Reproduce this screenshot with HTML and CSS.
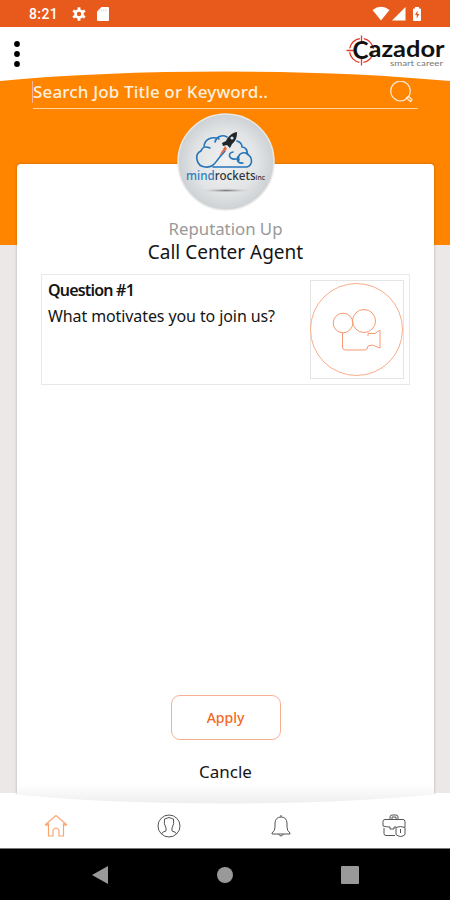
FILE: index.html
```html
<!DOCTYPE html>
<html lang="en">
<head>
<meta charset="utf-8">
<title>Cazador</title>
<link rel="stylesheet" href="styles.css">
</head>
<body>
<div class="status">
  <span class="clock">8:21</span>
  <svg class="gear" width="14" height="14" viewBox="0 0 14 14"><g fill="none" stroke="#fff"><circle cx="7" cy="7" r="3.5" stroke-width="2.6"/><path d="M7 .2V3M7 11v2.8M1.1 3.6l2.4 1.4M10.5 9l2.4 1.4M1.1 10.4L3.5 9M10.5 5l2.4-1.4" stroke-width="2.8"/></g></svg>
  <svg class="sd" width="12" height="14" viewBox="0 0 12 14"><path d="M4.5 0H11q1 0 1 1v12q0 1-1 1H1q-1 0-1-1V4.5z" fill="#fff"/><path d="M4.5 2.5v2M6.7 2.5v2M9 2.5v2" stroke="#f8cdb9"/></svg>
  <svg class="signals" width="52" height="16" viewBox="0 0 52 16" fill="#fff"><path d="M.5 4Q9 -2.5 17.500 4L9 14.500z"/><path d="M33.500 1v13.500H20z"/><path d="M43 2.500V1h4v1.500h1q1 0 1 1v10.500q0 1-1 1h-6q-1 0-1-1V3.500q0-1 1-1z"/><path d="M45.500 4.500L43 9h1.700v3.500L47.300 8h-1.800z" fill="#e85a1c"/></svg>
</div>
<header class="header">
  <svg class="curve" width="450" height="54" viewBox="0 0 450 54"><path d="M0 0H450V54Q350 44.500 225 44.500T0 54z" fill="#fff"/></svg>
  <svg class="dots" width="6" height="26" viewBox="0 0 6 26"><circle cx="3" cy="3" r="2.900"/><circle cx="3" cy="13" r="2.900"/><circle cx="3" cy="23" r="2.900"/></svg>
  <svg class="brand" width="100" height="34" viewBox="0 0 100 34">
    <g fill="none" stroke="#e23b2b" stroke-width="1.300"><circle cx="15.500" cy="15.500" r="12" stroke-dasharray="14.850 4" stroke-dashoffset="-2"/><path d="M15.500 .5v8M15.500 22.500v8M.5 15.500h9"/></g>
    <text class="brand-c" x="6.500" y="24" textLength="16" lengthAdjust="spacingAndGlyphs">C</text>
    <text class="brand-name" x="22.500" y="21.500" textLength="76" lengthAdjust="spacingAndGlyphs">azador</text>
    <text class="brand-sub" x="44" y="31" textLength="53" lengthAdjust="spacingAndGlyphs">smart career</text>
  </svg>
</header>
<main class="main">
  <div class="search">
    <span class="placeholder">Search Job Title or Keyword..</span>
    <svg width="24" height="24" viewBox="0 0 24 24" fill="none" stroke="#ffe7cf" stroke-width="1.300"><circle cx="10.500" cy="11" r="9.800"/><path d="M16.500 18l2-1.800 3.500 3.500-1.500 1.800-4-3.500z"/></svg>
  </div>
  <section class="card">
    <svg class="avatar" width="98" height="98" viewBox="0 0 98 98">
      <defs><radialGradient id="disc"><stop offset="0" stop-color="#f0f1f1"/><stop offset=".65" stop-color="#e2e4e5"/><stop offset="1" stop-color="#cdd1d4"/></radialGradient><radialGradient id="shade"><stop offset="0" stop-color="#777"/><stop offset="1" stop-color="#ddd" stop-opacity="0"/></radialGradient></defs>
      <circle cx="49" cy="49" r="48" fill="url(#disc)" stroke="#e9e9e8" stroke-width="1.500"/>
      <g fill="none" stroke="#2675b9" stroke-width="1.600" stroke-linecap="round">
        <path d="M50 24C45 21 39 24 38 29M42 26C35 23 28 26 27 33M33 35C26 32 25 36 24 38C17 41 19 53 28 54C36 55 38 50 42 45L48 38"/>
        <path d="M36 54H70C76 52 76 44 70 41C71 36 67 34 65 34C65 31 63 29 60 28M59 46C52 47 50 40 56 39M62 47C60 41 66 38 71 41M66 50C60 51 59 45 62 43"/>
      </g>
      <path d="M60 19C54 20 51 24 49 28L45 30L46 33L50 32L53 35L55 31C59 28 60 24 60 19z" fill="#20262c"/><circle cx="55" cy="25" r="1.600" fill="#dce2e5"/>
      <path d="M48 33L42 43L50 36z" fill="#e66a43"/>
      <text class="wordmark" x="9" y="67" textLength="79" lengthAdjust="spacingAndGlyphs"><tspan class="mind">mind</tspan>rockets<tspan class="inc">inc</tspan></text>
      <ellipse cx="49" cy="77.500" rx="27" ry="2.300" fill="url(#shade)"/>
    </svg>
    <p class="company">Reputation Up</p>
    <h1 class="job">Call Center Agent</h1>
    <article class="question">
      <div class="copy"><h2>Question #1</h2><p>What motivates you to join us?</p></div>
      <div class="video">
        <svg width="94" height="98" viewBox="0 0 94 98" fill="none" stroke="#f9ac88"><circle cx="46.500" cy="48.500" r="46"/><g stroke="#f69a72"><circle cx="33" cy="42" r="9.800"/><circle cx="54" cy="40" r="11.500"/><path d="M32.500 52V66Q32.500 69 35.500 69H55Q57.500 69 58 65L62 64L70 67V49L65 52.500H58V55"/></g></svg>
      </div>
    </article>
    <div class="actions"><button class="apply">Apply</button><span class="cancel">Cancle</span></div>
  </section>
</main>
<nav class="tabs">
  <svg class="curve" width="450" height="55" viewBox="0 0 450 55"><path d="M0 0Q100 10.500 225 10.500T450 0V55H0z" fill="#fff"/></svg>
  <div class="tab"><svg width="24" height="24" viewBox="0 0 24 24" fill="none" stroke="#f9a56f" stroke-width="1.200"><path d="M1.500 10.500L12 1.500l10.500 9-1 1-2-1.500v12h-4.500v-6q-3-4-6 0v6H4.500V10l-2 1.500z"/></svg></div>
  <div class="tab"><svg width="24" height="24" viewBox="0 0 24 24" fill="none" stroke="#555"><circle cx="12" cy="12" r="11"/><path d="M4.500 20q0-2 4.500-3v-3Q6.500 10 7.500 5q4.500-3 9 0 1 5-1.500 9v3q4.500 1 4.500 3"/></svg></div>
  <div class="tab"><svg width="24" height="24" viewBox="0 0 24 24" fill="none" stroke="#555"><path d="M12 1v2M3 19q3-2 3-6V9Q6.500 3 12 3t6 6v4q0 4 3 6v1H3zM9.500 20q2.500 4 5 0"/></svg></div>
  <div class="tab"><svg width="24" height="24" viewBox="0 0 24 24" fill="none" stroke="#555"><path d="M8 5V3q0-2 2-2h4q2 0 2 2v2M10 5V3h4v2M13 21.500H4q-2 0-2-2V14M3 5.500h18q2 0 2 2V13M1 12V7.500q0-2 2-2M1 12q3 1 7 1v2h4v-2h2M14 13.500q4-2 9 0v7q-4 4-9 0zM18.500 15v4"/></svg></div>
</nav>
<footer class="system">
  <svg width="16" height="18" viewBox="0 0 16 18"><path d="M0 9L16 0v18z"/></svg>
  <svg width="16" height="16" viewBox="0 0 16 16"><circle cx="8" cy="8" r="8"/></svg>
  <svg width="18" height="18" viewBox="0 0 18 18"><rect width="18" height="18" rx="1"/></svg>
</footer>
</body>
</html>
```
FILE: styles.css
```css
* { box-sizing: border-box; }
body { margin: 0; width: 450px; height: 900px; display: flex; flex-direction: column; overflow: hidden; font-family: "Noto Sans", "Open Sans", sans-serif; background: #fff; color: #151515; }
h1, h2, p { margin: 0; font-weight: 400; white-space: nowrap; }
svg { display: block; flex: none; }
.status { height: 27px; flex: none; background: #e85a1c; display: flex; align-items: center; padding: 1px 26px 0 29px; }
.clock { font: 500 14px/16px Roboto, sans-serif; color: #fff; width: 43px; letter-spacing: .4px; }
.sd { margin-left: 11px; }
.signals { margin-left: auto; }
.header { position: relative; height: 54px; flex: none; background: #ff8500; display: flex; justify-content: space-between; align-items: flex-start; padding: 14px 4px 0 14px; }
.curve { position: absolute; left: 0; top: 0; }
.dots, .brand { position: relative; }
.brand { margin-top: -6px; }
.brand-c { font: 700 25px Lato, sans-serif; fill: #111; }
.brand-name { font: 700 22.500px Lato, sans-serif; fill: #111; }
.brand-sub { font: 400 8px Lato, sans-serif; fill: #777; }
.main { flex: 1; min-height: 0; padding: 0 16px 0 17px; background: linear-gradient(#ff8500 164px, #ece8e7 164px); display: flex; flex-direction: column; }
.search { flex: none; height: 28px; margin-left: 16px; width: 385px; border-bottom: 1px solid #ffd4a0; display: flex; justify-content: space-between; align-items: flex-start; }
.placeholder { color: #fff0df; font-size: 17px; font-weight: 500; line-height: 22px; letter-spacing: .15px; border-left: 1px solid #ffb3a0; margin-left: -1px; white-space: nowrap; }
.search svg { margin-right: 4px; margin-top: -1px; }
.card { flex: 1; margin-top: 55px; margin-bottom: -12px; background: linear-gradient(#fff 620px, #eee 640px); border-radius: 4px 4px 0 0; box-shadow: 0 0 3px #0004; display: flex; flex-direction: column; align-items: center; padding: 0 24px; }
.avatar { margin-top: -51px; }
.wordmark { font: 500 12px "Noto Sans", sans-serif; fill: #30343a; }
.mind { fill: #2f7fc0; }
.inc { font-size: 7px; }
.company { color: #999; font-size: 16.800px; line-height: 23px; margin-top: 6px; }
.job { font-size: 19px; line-height: 24px; }
.question { width: 369px; height: 111px; margin-top: 10px; border: 1px solid #e8e8e8; display: flex; justify-content: space-between; padding: 4px 5px 0 6px; }
.question h2 { font-size: 16px; line-height: 22px; font-weight: 600; letter-spacing: -.8px; }
.question p { font-size: 16px; line-height: 24px; margin-top: 3px; letter-spacing: -.1px; }
.video { width: 94px; height: 99px; margin-top: 1px; border: 1px solid #e4e4e4; }
.video svg { margin-left: -1px; }
.actions { margin-top: 310px; display: flex; flex-direction: column; align-items: center; }
.apply { width: 110px; height: 45px; border: 1px solid #f8b094; border-radius: 9px; background: #fff; color: #f2691e; font: 500 14px "Noto Sans", sans-serif; }
.cancel { font-size: 17px; line-height: 24px; margin-top: 20px; }
.tabs { position: relative; height: 56px; flex: none; border-bottom: 1px solid #777; display: grid; grid-template-columns: repeat(4, 1fr); padding-top: 21px; }
.tab { display: flex; justify-content: center; position: relative; }
.system { height: 51px; flex: none; background: #000; fill: #999; display: flex; justify-content: space-between; align-items: center; padding: 0 91px 0 92px; }
```
